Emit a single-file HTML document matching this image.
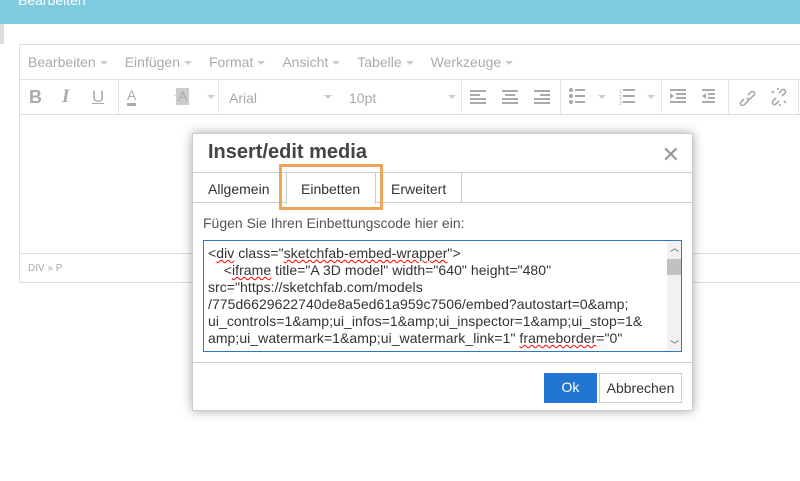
<!DOCTYPE html>
<html><head><style>
*{box-sizing:border-box;margin:0;padding:0}
body{width:800px;height:481px;overflow:hidden;background:#fff;font-family:"Liberation Sans",Arial,sans-serif;position:relative}
.top{position:absolute;left:0;top:0;width:800px;height:24px;background:#7fcadf;color:#fff;font-size:14px;padding-left:18px;line-height:0}
.ed{position:absolute;left:19px;top:44px;width:790px;height:239px;border:1px solid #ddd}
.menu{height:35px;border-bottom:1px solid #e2e2e2;color:#aaa;font-size:14px;line-height:35px;padding-left:8px}
.menu span{margin-right:17px}
.c{display:inline-block;width:0;height:0;border-left:4px solid transparent;border-right:4px solid transparent;border-top:4px solid #ccc;vertical-align:middle;margin-left:4px}
.tb{height:35px;border-bottom:1px solid #ddd;position:relative;color:#aaa;font-size:14px}
.tb>*{position:absolute}
.sep{top:0;width:1px;height:34px;background:#e6e6e6}
.stat{position:absolute;left:0;top:208px;width:100%;height:30px;border-top:1px solid #ddd;color:#aaa;font-size:10px;line-height:30px;padding-left:8px}
.dlg{position:absolute;left:192px;top:133px;width:501px;height:278px;background:#fff;border:1px solid #ccc;box-shadow:0 0 10px rgba(0,0,0,.35)}
.title{height:39px;border-bottom:1px solid #ccc;font-weight:bold;font-size:20px;color:#444;padding:7px 0 0 15px}
.x{position:absolute;right:12px;top:8px;font-size:22px;color:#999}
.tabs{height:30px;border-bottom:1px solid #ccc;position:relative;font-size:14px;color:#333}
.tabs span{position:absolute;top:8px}
.ta{position:absolute;left:10px;top:106px;width:479px;height:112px;border:1px solid #2d77c9;font-size:14px;color:#333;line-height:17px;padding:4px 16px 0 4px;white-space:pre;overflow:hidden;letter-spacing:.05px}
.sq{text-decoration:underline wavy red;text-decoration-thickness:1px}
.btn{position:absolute;top:239px;height:30px;font-size:14px;line-height:28px;text-align:center}
</style></head><body>
<div class="top">Bearbeiten</div>
<div style="position:absolute;left:0;top:24px;width:4px;height:20px;background:#ddd"></div>
<div class="ed">
<div class="menu"><span>Bearbeiten<i class="c"></i></span><span>Einfügen<i class="c"></i></span><span>Format<i class="c"></i></span><span>Ansicht<i class="c"></i></span><span>Tabelle<i class="c"></i></span><span>Werkzeuge<i class="c"></i></span></div>
<div class="tb">
<b style="left:9px;top:7px;font-size:18px;color:#aaa">B</b>
<i style="left:42px;top:6px;font-size:19px;font-family:'Liberation Serif';font-weight:bold">I</i>
<u style="left:72px;top:7px;font-size:17px">U</u>
<div class="sep" style="left:98px"></div>
<span style="left:107px;top:8px;border-bottom:3px solid #aaa;font-size:14px;line-height:15px">A</span><i class="c" style="left:150px;top:15px"></i>
<span style="left:156px;top:8px;background:#ccc;font-size:14px;line-height:17px;padding:0 2px">A</span><i class="c" style="left:183px;top:15px"></i>
<div class="sep" style="left:198px"></div>
<span style="left:209px;top:10px">Arial</span><i class="c" style="left:300px;top:15px"></i>
<span style="left:329px;top:10px">10pt</span><i class="c" style="left:424px;top:15px"></i>
<div class="sep" style="left:441px"></div>
<svg style="left:450px;top:10px" width="150" height="16" fill="#aaa"><rect x="0" y="0" width="16" height="2"/><rect x="0" y="4" width="10" height="2"/><rect x="0" y="8" width="16" height="2"/><rect x="0" y="12" width="16" height="2"/><rect x="32" y="0" width="16" height="2"/><rect x="35" y="4" width="10" height="2"/><rect x="32" y="8" width="16" height="2"/><rect x="32" y="12" width="16" height="2"/><rect x="64" y="0" width="16" height="2"/><rect x="70" y="4" width="10" height="2"/><rect x="64" y="8" width="16" height="2"/><rect x="64" y="12" width="16" height="2"/></svg>
<div class="sep" style="left:540px"></div>
<svg style="left:549px;top:8px" width="110" height="18" fill="#aaa"><circle cx="2" cy="2" r="2"/><circle cx="2" cy="8" r="2"/><circle cx="2" cy="14" r="2"/><rect x="6" y="1" width="10" height="2"/><rect x="6" y="7" width="10" height="2"/><rect x="6" y="13" width="10" height="2"/><path d="M29 7h8l-4 4z" fill="#ccc"/><rect x="54" y="1" width="12" height="2"/><rect x="54" y="7" width="12" height="2"/><rect x="54" y="13" width="12" height="2"/><text x="50" y="5" font-size="5" fill="#aaa">1</text><text x="50" y="11" font-size="5" fill="#aaa">2</text><text x="50" y="17" font-size="5" fill="#aaa">3</text><path d="M78 7h8l-4 4z" fill="#ccc"/></svg>
<div class="sep" style="left:641px"></div>
<svg style="left:650px;top:9px" width="45" height="16" fill="#aaa"><rect x="0" y="0" width="16" height="2"/><rect x="6" y="4" width="10" height="2"/><rect x="6" y="8" width="10" height="2"/><rect x="0" y="12" width="16" height="2"/><path d="M0 4l4 3-4 3z"/><rect x="32" y="0" width="16" height="2"/><rect x="38" y="4" width="10" height="2"/><rect x="38" y="8" width="10" height="2"/><rect x="32" y="12" width="16" height="2"/><path d="M36 4l-4 3 4 3z"/></svg>
<div class="sep" style="left:708px"></div>
<svg style="left:718px;top:8px" width="50" height="18" fill="none" stroke="#aaa" stroke-width="1.6"><path d="M6 11l-3 3a2 2 0 0 0 3 3l4-4a2 2 0 0 0-1-3M10 7l3-3a2 2 0 0 1 3 3l-4 4a2 2 0 0 1-3-1"/><path d="M38 10l-3 3a2 2 0 0 0 3 3l3-3M44 8l3-3a2 2 0 0 0-3-3l-3 3M34 3l2 2M48 15l-2-2M40 0v2M42 18v-2"/></svg>
<div class="sep" style="left:778px"></div>
</div>
<div class="stat">DIV » P</div>
</div>
<div class="dlg">
<div class="title">Insert/edit media</div>
<div class="x">✕</div>
<div class="tabs">
<span style="left:15px">Allgemein</span>
<div style="position:absolute;left:93px;top:0;width:90px;height:31px;border-left:1px solid #ccc;border-right:1px solid #ccc;background:#fff"></div>
<span style="left:108px">Einbetten</span>
<div style="position:absolute;left:268px;top:0;width:1px;height:30px;background:#ccc"></div>
<span style="left:198px">Erweitert</span>
</div>
<div style="position:absolute;left:10px;top:81px;font-size:14px;color:#555">Fügen Sie Ihren Einbettungscode hier ein:</div>
<div class="ta">&lt;<span class="sq">div</span> class="<span class="sq">sketchfab-embed-wrapper</span>"&gt;
    &lt;<span class="sq">iframe</span> title="A 3D model" width="640" height="480"
src="https://sketchfab.com/models
/775d6629622740de8a5ed61a959c7506/embed?autostart=0&amp;amp;
ui_controls=1&amp;amp;ui_infos=1&amp;amp;ui_inspector=1&amp;amp;ui_stop=1&amp;
amp;ui_watermark=1&amp;amp;ui_watermark_link=1" <span class="sq">frameborder</span>="0"</div>
<div style="position:absolute;left:474px;top:107px;width:14px;height:110px;background:#f1f1f1"><div style="margin-top:18px;height:16px;background:#c1c1c1"></div><div style="position:absolute;top:0;left:3px;font-size:9px;color:#555">︿</div><div style="position:absolute;bottom:0;left:3px;font-size:9px;color:#555">﹀</div></div>
<div style="position:absolute;left:0;top:228px;width:100%;height:1px;background:#ccc"></div>
<div class="btn" style="left:351px;width:53px;background:#2276d2;color:#fff">Ok</div>
<div class="btn" style="left:406px;width:83px;border:1px solid #ccc;color:#333">Abbrechen</div>
</div>
<div style="position:absolute;left:279px;top:164px;width:104px;height:46px;border:3px solid #f0a458"></div>
</body></html>
